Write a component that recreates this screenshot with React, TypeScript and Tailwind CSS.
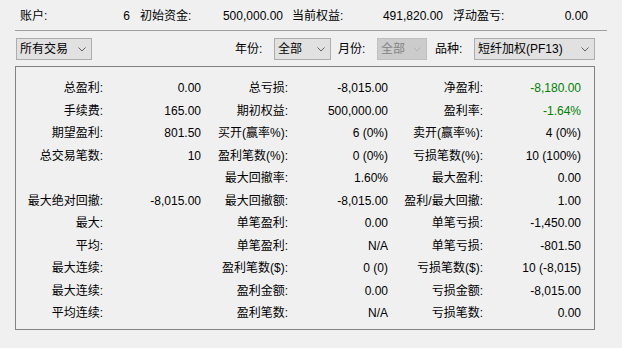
import React from "react"

const ROWS: [string, string, string, string, string, string, boolean][] = [
  ["总盈利:", "0.00", "总亏损:", "-8,015.00", "净盈利:", "-8,180.00", true],
  ["手续费:", "165.00", "期初权益:", "500,000.00", "盈利率:", "-1.64%", true],
  ["期望盈利:", "801.50", "买开(赢率%):", "6 (0%)", "卖开(赢率%):", "4 (0%)", false],
  ["总交易笔数:", "10", "盈利笔数(%):", "0 (0%)", "亏损笔数(%):", "10 (100%)", false],
  ["", "", "最大回撤率:", "1.60%", "最大盈利:", "0.00", false],
  ["最大绝对回撤:", "-8,015.00", "最大回撤额:", "-8,015.00", "盈利/最大回撤:", "1.00", false],
  ["最大:", "", "单笔盈利:", "0.00", "单笔亏损:", "-1,450.00", false],
  ["平均:", "", "单笔盈利:", "N/A", "单笔亏损:", "-801.50", false],
  ["最大连续:", "", "盈利笔数($):", "0 (0)", "亏损笔数($):", "10 (-8,015)", false],
  ["最大连续:", "", "盈利金额:", "0.00", "亏损金额:", "-8,015.00", false],
  ["平均连续:", "", "盈利笔数:", "N/A", "亏损笔数:", "0.00", false],
]

function Chevron({ disabled }: { disabled?: boolean }) {
  return (
    <svg width="8" height="5" viewBox="0 0 8 5" className="shrink-0">
      <polyline
        points="0.5,0.5 4,4 7.5,0.5"
        fill="none"
        stroke={disabled ? "#b4b4b4" : "#606060"}
        strokeWidth="1"
      />
    </svg>
  )
}

function Combo({ text, className, disabled }: { text: string; className: string; disabled?: boolean }) {
  return (
    <div
      className={
        "flex h-[22px] items-center justify-between border pl-[3px] pr-[5px] " +
        (disabled
          ? "border-[#bfbfbf] bg-[#cccccc] text-[#838383] "
          : "border-[#adadad] bg-[#e1e1e1] text-black ") +
        className
      }
    >
      <span>{text}</span>
      <Chevron disabled={disabled} />
    </div>
  )
}

export default function App() {
  return (
    <div className="h-[348px] w-[622px] overflow-hidden bg-[#f0f0f0] text-[12px] leading-none text-black [font-family:'Liberation_Sans','Noto_Sans_CJK_SC',sans-serif]">
      {/* Summary */}
      <div className="flex h-[30px] items-center pl-[20px] pt-[1px]">
        <div className="flex w-[110px] justify-between">
          <span>账户:</span>
          <span>6</span>
        </div>
        <div className="ml-[10px] flex w-[143px] justify-between">
          <span>初始资金:</span>
          <span>500,000.00</span>
        </div>
        <div className="ml-[9px] flex w-[151px] justify-between">
          <span>当前权益:</span>
          <span>491,820.00</span>
        </div>
        <div className="ml-[10px] flex w-[135px] justify-between">
          <span>浮动盈亏:</span>
          <span>0.00</span>
        </div>
      </div>
      <div className="mx-[15px] h-px bg-[#a0a0a0]" />

      {/* Filters */}
      <div className="mt-[7px] flex h-[22px] items-center">
        <Combo text="所有交易" className="ml-[16px] w-[76px] pl-[1px]" />
        <span className="ml-[143px] w-[39px]">年份:</span>
        <Combo text="全部" className="w-[57px]" />
        <span className="ml-[7px] w-[39px]">月份:</span>
        <Combo text="全部" className="w-[50px]" disabled />
        <span className="ml-[8px] w-[39px]">品种:</span>
        <Combo text="短纤加权(PF13)" className="w-[121px]" />
      </div>

      {/* Stats */}
      <div className="ml-[15px] mt-[6px] h-[264px] w-[580px] border border-[#828282] pt-[10px]">
        {ROWS.map((r, i) => (
          <div key={i} className="grid h-[22.5px] grid-cols-[87px_98px_87px_100px_95px_98px] items-center">
            <span className="text-right">{r[0]}</span>
            <span className="text-right">{r[1]}</span>
            <span className="text-right">{r[2]}</span>
            <span className="text-right">{r[3]}</span>
            <span className="text-right">{r[4]}</span>
            <span className={"text-right " + (r[6] ? "text-[#008000]" : "")}>{r[5]}</span>
          </div>
        ))}
      </div>
    </div>
  )
}
